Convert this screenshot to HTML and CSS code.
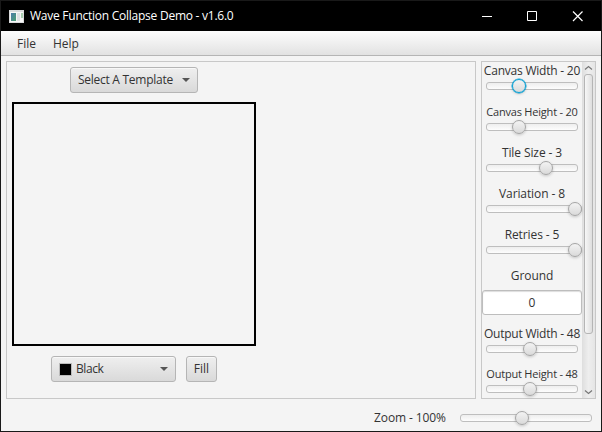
FILE: index.html
```html
<!DOCTYPE html>
<html lang="en">
<head>
<meta charset="utf-8">
<title>Wave Function Collapse Demo</title>
<link rel="stylesheet" href="styles.css">
</head>
<body>
<div class="window">
  <header class="titlebar">
    <svg class="app-icon" width="15" height="13" viewBox="0 0 15 13">
      <defs><linearGradient id="pic" x1="0" y1="0" x2="1" y2="1"><stop offset="0" stop-color="#4d7baa"/><stop offset="1" stop-color="#4ca071"/></linearGradient></defs>
      <path fill="#d9dadb" d="M0 0h15v13H0z"/><path fill="#f6f6f6" d="M1 2h13v10H1z"/>
      <path fill="url(#pic)" d="M2 3h5v8H2z"/><path fill="#dfe1e3" d="M8 3h3v8H8z"/><path fill="#a8cdb0" d="M12 3h2v5h-2z"/>
    </svg>
    <span class="caption">Wave Function Collapse Demo - v1.6.0</span>
    <svg class="controls" width="108" height="14" viewBox="0 0 108 14" fill="none" stroke="#fff">
      <path d="M0 7.5h10M45.5 2.500h9v9h-9z"/><path d="M91 2.500l9.500 9.500M100.500 2.500l-9.500 9.500" stroke-width="1.200"/>
    </svg>
  </header>
  <nav class="menubar"><span class="file">File</span><span class="help">Help</span></nav>
  <main class="workspace">
    <section class="editor">
      <div class="button template"><span>Select A Template</span><i class="arrow"></i></div>
      <div class="canvas"></div>
      <div class="tools">
        <div class="button color"><i class="swatch"></i><span>Black</span><i class="arrow"></i></div>
        <div class="button fill"><span>Fill</span></div>
      </div>
    </section>
    <aside class="settings">
      <div class="fields">
        <div class="field"><span class="label tight">Canvas Width - 20</span><div class="slider"><i class="thumb focused at-20"></i></div></div>
        <div class="field"><span class="label small">Canvas Height - 20</span><div class="slider"><i class="thumb at-20"></i></div></div>
        <div class="field"><span class="label">Tile Size - 3</span><div class="slider"><i class="thumb at-tile"></i></div></div>
        <div class="field"><span class="label">Variation - 8</span><div class="slider"><i class="thumb at-max"></i></div></div>
        <div class="field"><span class="label">Retries - 5</span><div class="slider"><i class="thumb at-max"></i></div></div>
        <div class="field ground"><span class="label">Ground</span><div class="input">0</div></div>
        <div class="field output"><span class="label tight">Output Width - 48</span><div class="slider"><i class="thumb at-48"></i></div></div>
        <div class="field"><span class="label small">Output Height - 48</span><div class="slider"><i class="thumb at-48"></i></div></div>
      </div>
      <div class="scrollbar">
        <svg width="9" height="6" viewBox="0 0 9 6"><path d="M1 4.500l3.500-3 3.500 3" fill="none" stroke="#777" stroke-width="1.200"/></svg>
        <div class="handle"></div>
        <svg width="9" height="6" viewBox="0 0 9 6"><path d="M1 1.500l3.500 3 3.500-3" fill="none" stroke="#777" stroke-width="1.200"/></svg>
      </div>
    </aside>
  </main>
  <footer class="statusbar"><span class="zoom-label">Zoom - 100%</span><div class="slider zoom"><i class="thumb at-100"></i></div></footer>
</div>
</body>
</html>
```
FILE: styles.css
```css
* { box-sizing: border-box; }
body { margin: 0; overflow: hidden; font: 12px/16px "Open Sans", "Noto Sans", sans-serif; color: #333; }
.window { width: 602px; height: 432px; border: 1px solid #191919; background: #f4f4f4; display: flex; flex-direction: column; }
span { white-space: nowrap; }

.titlebar { height: 30px; flex: none; background: #000; color: #fff; display: flex; align-items: center; padding: 0 9px 0 8px; }
.app-icon { flex: none; margin-right: 6px; }
.caption { flex: 1; letter-spacing: -0.25px; }
.controls { flex: none; margin-right: 2px; }

.menubar { height: 25px; flex: none; display: flex; align-items: center; padding: 1px 0 0 16px; border-bottom: 1px solid #b5b5b5; background: linear-gradient(#fdfdfd, #e2e2e2); }
.file { width: 36px; }

.workspace { height: 338px; margin: 5px 5px 0; display: flex; gap: 5px; flex: none; }
.editor { width: 470px; flex: none; border: 1px solid #c8c8c8; padding: 5px; }
.button { height: 26px; border: 1px solid #b5b5b5; border-radius: 3px; background: linear-gradient(#efefef, #d9d9d9); box-shadow: inset 0 1px #f8f8f8; display: flex; align-items: center; padding: 0 7px; }
.template { width: 128px; margin-left: 58px; letter-spacing: -0.27px; }
.canvas { width: 244px; height: 244px; border: 2px solid #000; margin: 9px 0 10px; }
.tools { display: flex; gap: 10px; padding-left: 39px; }
.color { width: 125px; letter-spacing: -0.4px; }
.fill { width: 31px; padding: 0; justify-content: center; }
.arrow { margin-left: auto; border: 4px solid transparent; border-top-color: #555; border-bottom: 0; }
.swatch { width: 13px; height: 13px; border: 1px solid #bbb; background: #000; margin-right: 4px; }

.settings { width: 115px; flex: none; border: 1px solid #c8c8c8; display: flex; }
.fields { width: 100px; padding-top: 1px; display: flex; flex-direction: column; gap: 11px; flex: none; }
.field { display: flex; flex-direction: column; align-items: center; height: 30px; flex: none; }
.label { height: 16px; letter-spacing: -0.1px; }
.tight { letter-spacing: -0.22px; }
.small { font-size: 11px; letter-spacing: -0.2px; }
.ground { height: 47px; }
.output { margin-bottom: -1px; }
.input { width: 100px; height: 25px; margin-top: 6px; border: 1px solid #bdbdbd; border-radius: 3px; background: #fff; box-shadow: inset 0 1px 1px #ddd; text-align: center; line-height: 24px; }

.slider { width: 92px; height: 14px; display: grid; align-items: center; }
.slider::before { content: ""; grid-area: 1 / 1; height: 6px; border: 1px solid #bebebe; border-radius: 3px; background: linear-gradient(#eee, #fdfdfd); }
.thumb { grid-area: 1 / 1; width: 14px; height: 14px; border: 1px solid #a5a5a5; border-radius: 50%; background: linear-gradient(#f3f3f3, #dadada); box-shadow: 0 1px 3px #0003; z-index: 1; }
.focused { border-color: #039ed3; box-shadow: 0 0 0 0.5px #039ed3, 0 1px 3px #0003; }
.at-20 { margin-left: 26px; }
.at-tile { margin-left: 53px; }
.at-max { margin-left: 82px; }
.at-48 { margin-left: 37px; }
.at-100 { margin-left: 55px; }

.scrollbar { width: 13px; background: linear-gradient(90deg, #dedede, #eee 50%, #e5e5e5); display: flex; flex-direction: column; align-items: center; padding: 3px 1px 3px 0; }
.handle { width: 9px; height: 260px; margin: 3px 0 auto; border: 1px solid #b5b5b5; border-radius: 3px; background: linear-gradient(90deg, #f7f7f7, #dedede); }

.statusbar { flex: 1; display: flex; align-items: center; justify-content: flex-end; padding: 6px 9px 0 0; }
.zoom-label { width: 86px; letter-spacing: -0.1px; }
.zoom { width: 132px; }
```
